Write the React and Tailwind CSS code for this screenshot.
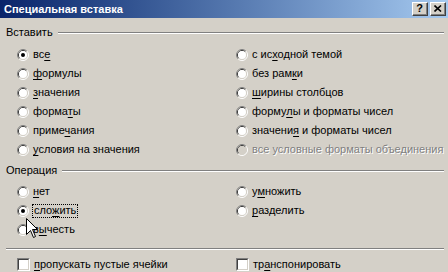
import React from "react";

const Radio = ({ checked, disabled }) => (
  <svg width="12" height="12" viewBox="0 0 12 12" className="shrink-0">
    <path d="M2.11 9.89 A5.5 5.5 0 0 1 9.89 2.11" fill="none" stroke="#808080" />
    <path d="M9.89 2.11 A5.5 5.5 0 0 1 2.11 9.89" fill="none" stroke="#ffffff" />
    <path d="M2.82 9.18 A4.5 4.5 0 0 1 9.18 2.82" fill="none" stroke="#404040" />
    <path d="M9.18 2.82 A4.5 4.5 0 0 1 2.82 9.18" fill="none" stroke="#d4d0c8" />
    <circle cx="6" cy="6" r="4" fill={disabled ? "#d4d0c8" : "#ffffff"} />
    {checked && <circle cx="6" cy="6" r="2" fill="#000000" />}
  </svg>
);

const Check = () => (
  <div className="w-[13px] h-[13px] shrink-0 border border-t-[#808080] border-l-[#808080] border-b-white border-r-white">
    <div className="w-full h-full bg-white border border-t-[#404040] border-l-[#404040] border-b-[#d4d0c8] border-r-[#d4d0c8]" />
  </div>
);

// label with one underlined accelerator letter: [before, key, after]
const Label = ({ parts }) => (
  <span className="whitespace-nowrap">
    {parts[0]}
    {parts[1] && <span className="underline underline-offset-[2px]">{parts[1]}</span>}
    {parts[2]}
  </span>
);

const Option = ({ parts, checked, disabled, focus }) => (
  <div className="h-[19px] flex items-center">
    <Radio checked={checked} disabled={disabled} />
    {disabled ? (
      <span className="ml-[4px] whitespace-nowrap text-[#808080] [text-shadow:1px_1px_0_#ffffff]">
        {parts[0]}
      </span>
    ) : focus ? (
      <span className="ml-[3px] px-[1px] leading-[11px] pb-[1px] border border-dotted border-black">
        <Label parts={parts} />
      </span>
    ) : (
      <span className="ml-[4px]">
        <Label parts={parts} />
      </span>
    )}
  </div>
);

const GroupTitle = ({ title }) => (
  <div className="h-[13px] flex items-center pl-[6px] pr-[4px]">
    <span className="whitespace-nowrap">{title}</span>
    <div className="flex-1 ml-[5px] h-[2px] border-t border-t-[#808080] border-b border-b-white" />
  </div>
);

const pasteLeft = [
  { parts: ["вс", "е", ""], checked: true },
  { parts: ["", "ф", "ормулы"] },
  { parts: ["", "з", "начения"] },
  { parts: ["форма", "т", "ы"] },
  { parts: ["приме", "ч", "ания"] },
  { parts: ["", "у", "словия на значения"] },
];

const pasteRight = [
  { parts: ["с ис", "х", "одной темой"] },
  { parts: ["без рам", "к", "и"] },
  { parts: ["", "ш", "ирины столбцов"] },
  { parts: ["форму", "л", "ы и форматы чисел"] },
  { parts: ["значени", "я", " и форматы чисел"] },
  { parts: ["все условные форматы объединения"], disabled: true },
];

const TitleButton = ({ children }) => (
  <div className="w-[16px] h-[14px] bg-[#d4d0c8] border border-t-white border-l-white border-b-[#404040] border-r-[#404040]">
    <div className="w-full h-full flex items-center justify-center border-b border-r border-b-[#808080] border-r-[#808080]">
      {children}
    </div>
  </div>
);

export default function App() {
  return (
    <div className="relative w-[448px] h-[272px] overflow-hidden bg-[#d4d0c8] text-black text-[11px] leading-[13px] font-['Liberation_Sans',sans-serif]">
      <div className="h-[18px] flex items-center justify-between pl-[4px] pr-[2px] bg-gradient-to-r from-[#0a246a] to-[#a6caf0]">
        <span className="text-white font-bold">Специальная вставка</span>
        <div className="flex gap-[2px]">
          <TitleButton>
            <span className="font-bold text-[11px] leading-none">?</span>
          </TitleButton>
          <TitleButton>
            <svg width="8" height="7" viewBox="0 0 8 7">
              <path d="M0.5 0.5 L7 6.5 M7 0.5 L0.5 6.5" stroke="#000" strokeWidth="1.6" />
            </svg>
          </TitleButton>
        </div>
      </div>

      <div className="mt-[8px]">
        <GroupTitle title="Вставить" />
      </div>
      <div className="mt-[6px] grid grid-cols-[219px_1fr] pl-[17px]">
        <div className="flex flex-col">
          {pasteLeft.map((o, i) => (
            <Option key={i} {...o} />
          ))}
        </div>
        <div className="flex flex-col">
          {pasteRight.map((o, i) => (
            <Option key={i} {...o} />
          ))}
        </div>
      </div>

      <div className="mt-[5px]">
        <GroupTitle title="Операция" />
      </div>
      <div className="mt-[5px] grid grid-cols-[219px_1fr] pl-[17px]">
        <div className="flex flex-col">
          <Option parts={["", "н", "ет"]} />
          <Option parts={["сло", "ж", "ить"]} checked focus />
          <Option parts={["в", "ы", "честь"]} />
        </div>
        <div className="flex flex-col">
          <Option parts={["у", "м", "ножить"]} />
          <Option parts={["", "р", "азделить"]} />
        </div>
      </div>

      <div className="mt-[9px] mx-[6px] mr-[4px] h-[2px] border-t border-t-[#808080] border-b border-b-white" />

      <div className="mt-[8px] grid grid-cols-[219px_1fr] pl-[17px]">
        <div className="flex items-center">
          <Check />
          <span className="ml-[4px]">
            <Label parts={["", "п", "ропускать пустые ячейки"]} />
          </span>
        </div>
        <div className="flex items-center">
          <Check />
          <span className="ml-[4px]">
            <Label parts={["тр", "а", "нспонировать"]} />
          </span>
        </div>
      </div>

      {/* mouse pointer */}
      <svg className="absolute left-[26px] top-[218px]" width="13" height="21" viewBox="0 0 13 21">
        <path
          d="M0.5 0.5 L0.5 16.5 L4.5 12.5 L7.5 19.5 L9.5 18.5 L6.5 11.5 L11.5 11.5 Z"
          fill="#ffffff"
          stroke="#000000"
          strokeLinejoin="miter"
        />
      </svg>
    </div>
  );
}
